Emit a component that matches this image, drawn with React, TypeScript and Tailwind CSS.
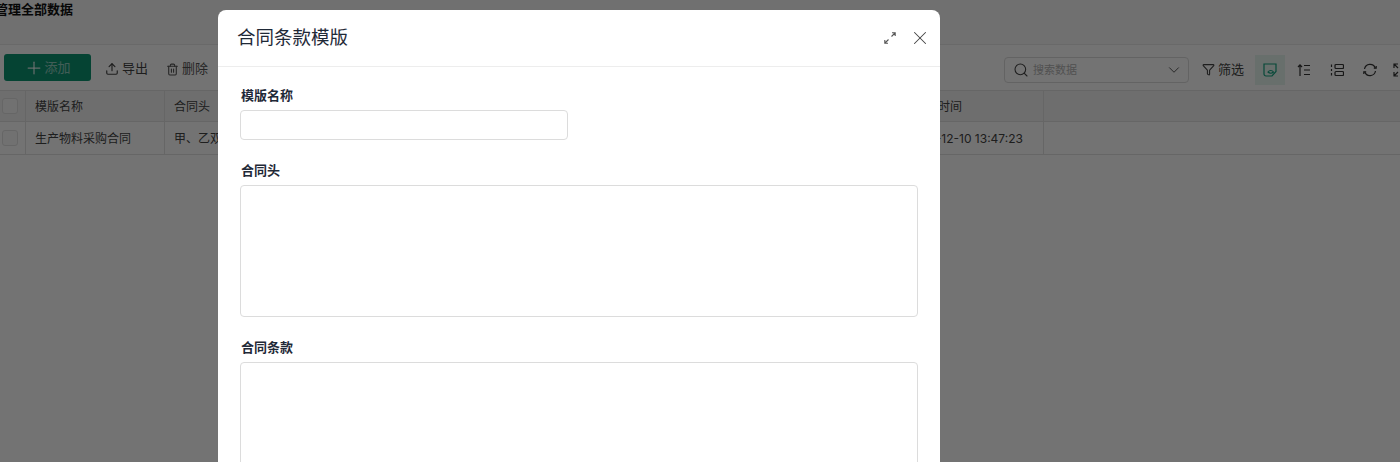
import { Upload, Trash2, Plus, Search, ChevronDown, Filter, X } from "lucide-react";

const font = "font-['Inter','Noto_Sans_CJK_SC',sans-serif]";

function ExpandIcon() {
  return (
    <svg width="14" height="14" viewBox="0 0 14 14" fill="none" stroke="#555" strokeWidth="1.1">
      <path d="M8.5 5.5 L12 2 M9 1.8 H12.2 V5" />
      <path d="M5.5 8.5 L2 12 M1.8 9 V12.2 H5" />
    </svg>
  );
}

function SortIcon() {
  return (
    <svg width="14" height="14" viewBox="0 0 14 14" fill="none" stroke="#333" strokeWidth="1.2">
      <path d="M3 13 V2 M1 4 L3 1.8 L5 4" />
      <path d="M7 2.5 H13 M7 7 H13 M7 11.5 H13" />
    </svg>
  );
}

function RowsIcon() {
  return (
    <svg width="14" height="14" viewBox="0 0 14 14" fill="none" stroke="#333" strokeWidth="1.2">
      <rect x="5" y="1.5" width="8.5" height="4" rx="1" />
      <rect x="5" y="8.5" width="8.5" height="4" rx="1" />
      <path d="M1.5 1.5 V4 M1.5 6 V8 M1.5 10 V12.5" />
    </svg>
  );
}

function SyncIcon() {
  return (
    <svg width="14" height="14" viewBox="0 0 14 14" fill="none" stroke="#333" strokeWidth="1.2">
      <path d="M1.5 6 A5.6 5.6 0 0 1 12.3 5.2" />
      <path d="M12.5 8 A5.6 5.6 0 0 1 1.7 8.8" />
      <path d="M10.8 5.2 H13.2 V3" />
      <path d="M3.2 8.8 H0.8 V11" />
    </svg>
  );
}

function NoteEyeIcon() {
  return (
    <svg width="14" height="14" viewBox="0 0 14 14" fill="none" stroke="#12a37f" strokeWidth="1.2">
      <path d="M1 1 H13 V8.5 L9 13 H3 A2 2 0 0 1 1 11 Z" />
      <path d="M5 9 C6.5 7 9 7 10.5 9 C9 10.5 6.5 10.5 5 9 Z" />
    </svg>
  );
}

function FullIcon() {
  return (
    <svg width="14" height="14" viewBox="0 0 14 14" fill="none" stroke="#333" strokeWidth="1.2">
      <path d="M1 5 V1 H5 M1 1 L5 5" />
      <path d="M1 9 V13 H5 M1 13 L5 9" />
      <path d="M9 1 H13 V5 M13 1 L9 5" />
      <path d="M13 9 V13 H9 M13 13 L9 9" />
    </svg>
  );
}

function Checkbox() {
  return <span className="block w-[16px] h-[16px] rounded-[3px] border border-[#e2e2e2] bg-[#fafafa]" />;
}

function Field({ label, box }: { label: string; box: string }) {
  return (
    <div className="flex flex-col">
      <label className="ml-[1px] text-[13px] leading-[17px] font-semibold text-[#1f2937] mb-[6px]">{label}</label>
      <div className={`${box} rounded-[4px] border border-[#dcdcdc] bg-white`} />
    </div>
  );
}

export default function App() {
  return (
    <div className={`relative w-[1400px] h-[462px] overflow-hidden bg-white ${font}`}>
      <div className="h-[45px] border-b border-[#e8e8e8] bg-[#f8f8f8]">
        <div className="-ml-[5px] whitespace-nowrap text-[13px] leading-[18px] font-semibold text-[#111]">管理全部数据</div>
      </div>

      <div className="h-[45px] flex items-center justify-between pl-[4px] bg-white">
        <div className="flex items-center">
          <button className="w-[87px] h-[27px] rounded-[3px] bg-[#0c9472] text-white/55 text-[13px] flex items-center justify-center">
            <Plus size={20} strokeWidth={1.5} className="text-white/85" />
            添加
          </button>
          <span className="mt-[3px] ml-[14px] flex items-center gap-[3px] text-[13px] text-[#444]">
            <Upload size={14} />
            导出
          </span>
          <span className="mt-[3px] ml-[18px] flex items-center gap-[3px] text-[13px] text-[#555]">
            <Trash2 size={13} />
            删除
          </span>
        </div>
        <div className="mt-[4px] flex items-center">
          <div className="w-[185px] h-[26px] rounded-[4px] border border-[#dcdcdc] flex items-center pl-[8px] pr-[5px] text-[11px] text-[#b4b4b4]">
            <Search size={16} strokeWidth={1.6} className="text-[#444]" />
            <span className="ml-[4px] pt-[2px] flex-1">搜索数据</span>
            <ChevronDown size={18} strokeWidth={1.3} className="text-[#555]" />
          </div>
          <span className="ml-[13px] flex items-center gap-[3px] text-[13px] text-[#444]">
            <Filter size={13} />
            筛选
          </span>
          <span className="ml-[11px] w-[30px] h-[30px] bg-[#e6f5f0] flex items-center justify-center">
            <NoteEyeIcon />
          </span>
          <span className="ml-[8px] w-[22px] flex justify-center"><SortIcon /></span>
          <span className="ml-[11px] w-[22px] flex justify-center"><RowsIcon /></span>
          <span className="ml-[11px] w-[22px] flex justify-center"><SyncIcon /></span>
          <span className="ml-[8px] w-[22px] -mr-[11px] flex justify-center"><FullIcon /></span>
        </div>
      </div>

      <div className="text-[12px] text-[#444] border-t border-[#e3e3e3]">
        <div className="h-[31px] flex items-center bg-[#f3f3f3] border-b border-[#e3e3e3]">
          <div className="w-[26px] h-full flex items-center pl-[2px] border-r border-[#e3e3e3]"><Checkbox /></div>
          <div className="w-[139px] h-full flex items-center pl-[9px] pt-[1px] border-r border-[#e3e3e3]">模版名称</div>
          <div className="w-[739px] h-full flex items-center pl-[9px] pt-[1px]">合同头</div>
          <div className="w-[140px] h-full flex items-center pl-[10px] pt-[1px] border-r border-[#e3e3e3]">创建时间</div>
        </div>
        <div className="h-[33px] flex items-center border-b border-[#e3e3e3]">
          <div className="w-[26px] h-full flex items-center pl-[2px] border-r border-[#e3e3e3]"><Checkbox /></div>
          <div className="w-[139px] h-full flex items-center pl-[9px] pt-[1px] border-r border-[#e3e3e3]">生产物料采购合同</div>
          <div className="w-[739px] h-full flex items-center pl-[9px] pt-[1px]">甲、乙双方</div>
          <div className="w-[140px] h-full flex items-center pl-[2px] pt-[1px] border-r border-[#e3e3e3] whitespace-nowrap">2024-12-10 13:47:23</div>
        </div>
      </div>

      <div className="absolute inset-0 bg-black/55" />

      <div className="absolute left-[218px] top-[10px] w-[722px] h-[500px] rounded-[8px] bg-white">
        <div className="h-[57px] flex items-center justify-between border-b border-[#ededed] pl-[19px] pr-[9px]">
          <h2 className="text-[18.5px] font-normal text-[#1f2937]">合同条款模版</h2>
          <div className="flex items-center gap-[12px]">
            <ExpandIcon />
            <X size={22} strokeWidth={1.1} className="text-[#444]" />
          </div>
        </div>
        <div className="flex flex-col gap-[22px] px-[22px] pt-[20px]">
          <Field label="模版名称" box="w-[328px] h-[30px]" />
          <Field label="合同头" box="w-full h-[132px]" />
          <Field label="合同条款" box="w-full h-[132px]" />
        </div>
      </div>
    </div>
  );
}
